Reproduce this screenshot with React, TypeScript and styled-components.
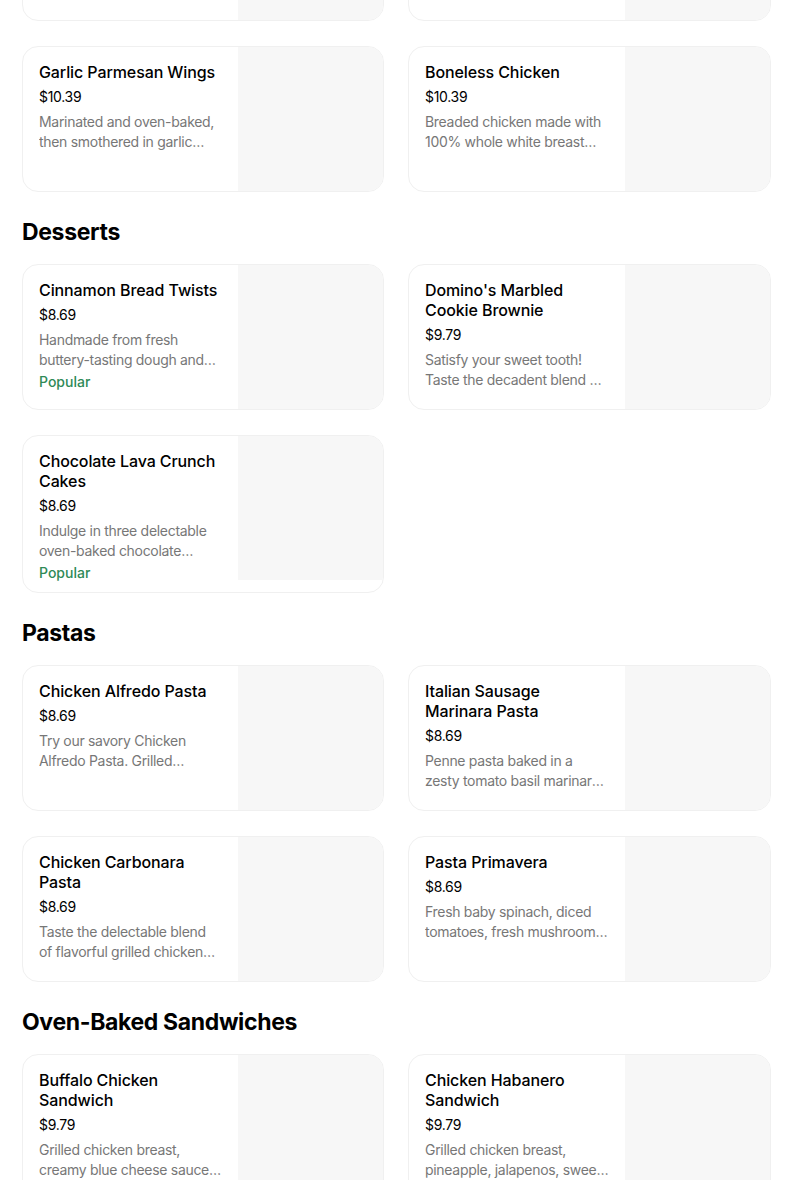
import styled, { createGlobalStyle } from "styled-components";

const GlobalStyle = createGlobalStyle`
  html, body {
    margin: 0;
    padding: 0;
    background: #ffffff;
    overflow: hidden;
  }
  body {
    font-family: Inter, "Noto Sans", "Liberation Sans", sans-serif;
    color: #000000;
  }
`;

type Item = {
  name: string;
  price: string;
  desc: string;
  popular?: boolean;
};

type Section = {
  title: string;
  items: Item[];
};

const sections: Section[] = [
  {
    title: "Wings",
    items: [
      {
        name: "Traditional Wings Bone-In",
        price: "$10.39",
        desc: "Marinated and oven-baked, then sauced with your favorite flavor",
      },
      {
        name: "Specialty Chicken Bites",
        price: "$10.39",
        desc: "Crispy bites of white meat chicken made with 100% breast meat",
      },
      {
        name: "Garlic Parmesan Wings",
        price: "$10.39",
        desc: "Marinated and oven-baked, then smothered in garlic parmesan sauce",
      },
      {
        name: "Boneless Chicken",
        price: "$10.39",
        desc: "Breaded chicken made with 100% whole white breast meat",
      },
    ],
  },
  {
    title: "Desserts",
    items: [
      {
        name: "Cinnamon Bread Twists",
        price: "$8.69",
        desc: "Handmade from fresh buttery-tasting dough and baked to a golden brown",
        popular: true,
      },
      {
        name: "Domino's Marbled Cookie Brownie",
        price: "$9.79",
        desc: "Satisfy your sweet tooth! Taste the decadent blend of gooey milk chocolate chunk cookie",
      },
      {
        name: "Chocolate Lava Crunch Cakes",
        price: "$8.69",
        desc: "Indulge in three delectable oven-baked chocolate cakes with molten centers",
        popular: true,
      },
    ],
  },
  {
    title: "Pastas",
    items: [
      {
        name: "Chicken Alfredo Pasta",
        price: "$8.69",
        desc: "Try our savory Chicken Alfredo Pasta. Grilled chicken breast and creamy Alfredo sauce",
      },
      {
        name: "Italian Sausage Marinara Pasta",
        price: "$8.69",
        desc: "Penne pasta baked in a zesty tomato basil marinara sauce with Italian sausage",
      },
      {
        name: "Chicken Carbonara Pasta",
        price: "$8.69",
        desc: "Taste the delectable blend of flavorful grilled chicken breast, smoked bacon",
      },
      {
        name: "Pasta Primavera",
        price: "$8.69",
        desc: "Fresh baby spinach, diced tomatoes, fresh mushrooms and onions",
      },
    ],
  },
  {
    title: "Oven-Baked Sandwiches",
    items: [
      {
        name: "Buffalo Chicken Sandwich",
        price: "$9.79",
        desc: "Grilled chicken breast, creamy blue cheese sauce, hot sauce and onions",
      },
      {
        name: "Chicken Habanero Sandwich",
        price: "$9.79",
        desc: "Grilled chicken breast, pineapple, jalapenos, sweet mango habanero sauce",
      },
    ],
  },
];

// scrolled view: the first section's heading sits above the fold
const Page = styled.main`
  width: 749px;
  margin: -197px 0 0 22px;
  display: flex;
  flex-direction: column;
`;

const SectionTitle = styled.h2`
  margin: 24px 0 16px;
  font-size: 23px;
  line-height: 32px;
  font-weight: 700;
  letter-spacing: -0.35px;
  color: #000000;
`;

const Grid = styled.div`
  display: grid;
  grid-template-columns: 362px 363px;
  column-gap: 24px;
  row-gap: 25px;
  align-items: start;
`;

const Card = styled.div`
  display: flex;
  align-items: flex-start;
  border: 1px solid #f0f0f0;
  border-radius: 16px;
  overflow: hidden;
  background: #ffffff;
`;

const Info = styled.div`
  flex: 1;
  min-width: 0;
  padding: 15px 16px 9px;
  display: flex;
  flex-direction: column;
`;

const Name = styled.div`
  font-size: 16px;
  line-height: 20px;
  font-weight: 500;
  letter-spacing: -0.1px;
  color: #000000;
`;

const Price = styled.div`
  margin-top: 5px;
  font-size: 14px;
  line-height: 20px;
  color: #000000;
  letter-spacing: -0.3px;
`;

const Desc = styled.div`
  margin-top: 5px;
  font-size: 14px;
  line-height: 20px;
  letter-spacing: -0.3px;
  color: #777777;
  display: -webkit-box;
  -webkit-line-clamp: 2;
  -webkit-box-orient: vertical;
  overflow: hidden;
`;

const Popular = styled.div`
  margin-top: 2px;
  font-size: 14px;
  line-height: 20px;
  font-weight: 500;
  color: #2f8a57;
`;

const Thumb = styled.div`
  flex: 0 0 145px;
  height: 144px;
  background: #f7f7f7;
`;

function MenuCard({ item }: { item: Item }) {
  return (
    <Card>
      <Info>
        <Name>{item.name}</Name>
        <Price>{item.price}</Price>
        <Desc>{item.desc}</Desc>
        {item.popular && <Popular>Popular</Popular>}
      </Info>
      <Thumb />
    </Card>
  );
}

export default function App() {
  return (
    <>
      <GlobalStyle />
      <Page>
        {sections.map((s) => (
          <section key={s.title}>
            <SectionTitle>{s.title}</SectionTitle>
            <Grid>
              {s.items.map((it) => (
                <MenuCard key={it.name} item={it} />
              ))}
            </Grid>
          </section>
        ))}
      </Page>
    </>
  );
}
